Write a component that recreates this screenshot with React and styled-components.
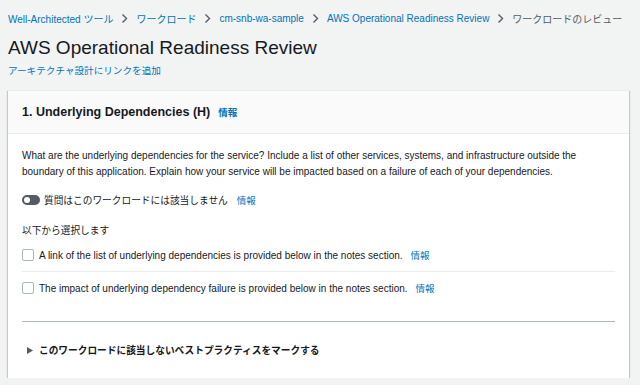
import React from 'react';
import styled, { createGlobalStyle } from 'styled-components';

const GlobalStyle = createGlobalStyle`
    body {
        margin: 0;
        background: #f2f3f3;
        font-family: "Liberation Sans", "Noto Sans CJK JP", sans-serif;
        color: #16191f;
    }
`;

const Page = styled.div`
    padding: 0 11px 0 8px;
    display: flex;
    flex-direction: column;
`;

const Breadcrumbs = styled.nav`
    display: flex;
    align-items: center;
    height: 18px;
    margin-top: 9px;
    font-size: 10px;
    gap: 8px;
`;

const Crumb = styled.a`
    color: ${props => (props.current ? '#545b64' : '#0073bb')};
    text-decoration: none;
    white-space: nowrap;
`;

const Chevron = () => (
    <svg width="7" height="11" viewBox="0 0 7 11" style={{ flexShrink: 0 }}>
        <path d="M1.5 1.5 L5.5 5.5 L1.5 9.5" fill="none" stroke="#545b64" strokeWidth="1.4" />
    </svg>
);

const Title = styled.h1`
    margin: 8px 0 0;
    font-size: 19px;
    font-weight: 400;
    line-height: 26px;
`;

const SubLink = styled.a`
    color: #0073bb;
    font-size: 9.6px;
    line-height: 16px;
    margin-top: 2px;
    text-decoration: none;
`;

const Card = styled.section`
    margin-top: 11px;
    background: #fff;
    box-shadow: 0 1px 1px 0 rgba(0, 28, 36, 0.3), 1px 1px 1px 0 rgba(0, 28, 36, 0.15), -1px 1px 1px 0 rgba(0, 28, 36, 0.15);
    border-top: 1px solid #eaeded;
`;

const CardHeader = styled.header`
    height: 42px;
    background: #fafafa;
    border-bottom: 1px solid #eaeded;
    display: flex;
    align-items: center;
    padding: 0 14px;
    gap: 8px;
`;

const HeaderTitle = styled.h2`
    margin: 0;
    font-size: 12.5px;
    font-weight: 700;
`;

const Info = styled.a`
    color: #0073bb;
    font-size: 9.5px;
    font-weight: ${props => (props.bold ? 700 : 400)};
    text-decoration: none;
    margin-left: ${props => props.gap || 0}px;
`;

const CardBody = styled.div`
    padding: 14px 14px 0;
`;

const Question = styled.p`
    margin: 0;
    font-size: 10px;
    line-height: 16px;
    color: #16191f;
`;

const ToggleRow = styled.div`
    display: flex;
    align-items: center;
    margin-top: 12px;
    height: 16px;
    font-size: 9.7px;
    color: #16191f;
`;

const Toggle = styled.span`
    width: 18px;
    height: 10px;
    border-radius: 5px;
    background: #545b64;
    position: relative;
    margin-right: 4px;
    &::after {
        content: '';
        position: absolute;
        left: 2px;
        top: 2px;
        width: 6px;
        height: 6px;
        border-radius: 50%;
        background: #fff;
    }
`;

const ChoiceLabel = styled.div`
    margin-top: 15px;
    font-size: 9.7px;
    line-height: 16px;
    color: #16191f;
`;

const Choices = styled.div`
    padding-bottom: 17px;
    border-bottom: 1px solid #aab7b8;
`;

const Choice = styled.label`
    display: flex;
    align-items: center;
    height: 32px;
    font-size: 10px;
    color: #16191f;
    & + & {
        border-top: 1px solid #eaeded;
    }
`;

const Box = styled.span`
    width: 10px;
    height: 10px;
    border: 1px solid #aab7b8;
    border-radius: 2px;
    margin-right: 5px;
    flex-shrink: 0;
`;

const Expander = styled.div`
    display: flex;
    align-items: center;
    height: 56px;
    padding-left: 5px;
    gap: 6px;
    font-size: 9.7px;
    font-weight: 700;
    color: #16191f;
`;

const choices = [
    'A link of the list of underlying dependencies is provided below in the notes section.',
    'The impact of underlying dependency failure is provided below in the notes section.'
];

export default function App() {
    return (
        <Page>
            <GlobalStyle />
            <Breadcrumbs>
                <Crumb>Well-Architected ツール</Crumb>
                <Chevron />
                <Crumb>ワークロード</Crumb>
                <Chevron />
                <Crumb>cm-snb-wa-sample</Crumb>
                <Chevron />
                <Crumb>AWS Operational Readiness Review</Crumb>
                <Chevron />
                <Crumb current>ワークロードのレビュー</Crumb>
            </Breadcrumbs>
            <Title>AWS Operational Readiness Review</Title>
            <SubLink>アーキテクチャ設計にリンクを追加</SubLink>
            <Card>
                <CardHeader>
                    <HeaderTitle>1. Underlying Dependencies (H)</HeaderTitle>
                    <Info bold>情報</Info>
                </CardHeader>
                <CardBody>
                    <Question>
                        What are the underlying dependencies for the service? Include a list of other services, systems, and infrastructure outside the boundary of this application. Explain how your service will be impacted based on a failure of each of your dependencies.
                    </Question>
                    <ToggleRow>
                        <Toggle />
                        質問はこのワークロードには該当しません
                        <Info gap={9}>情報</Info>
                    </ToggleRow>
                    <ChoiceLabel>以下から選択します</ChoiceLabel>
                    <Choices>
                        {choices.map(text => (
                            <Choice key={text}>
                                <Box />
                                {text}
                                <Info gap={8}>情報</Info>
                            </Choice>
                        ))}
                    </Choices>
                    <Expander>
                        <svg width="6" height="7" viewBox="0 0 6 7">
                            <path d="M0 0 L6 3.5 L0 7 Z" fill="#545b64" />
                        </svg>
                        このワークロードに該当しないベストプラクティスをマークする
                    </Expander>
                </CardBody>
            </Card>
        </Page>
    );
}
